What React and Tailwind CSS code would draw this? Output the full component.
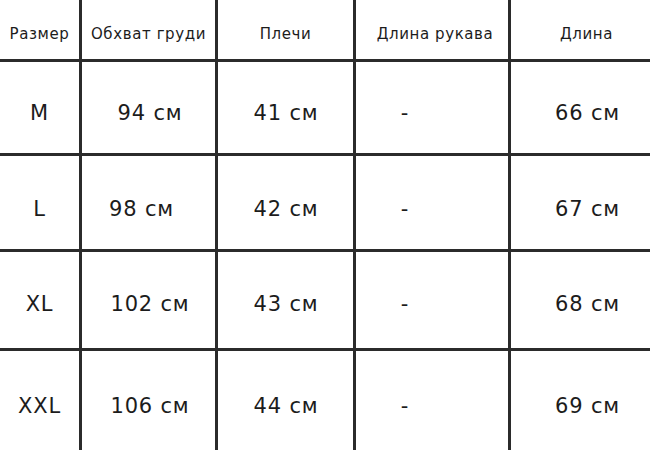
import React from "react";

const headers = ["Размер", "Обхват груди", "Плечи", "Длина рукава", "Длина"];

const rows = [
  { size: "M", chest: "94 см", shoulders: "41 см", length: "66 см", pad: "pt-[13px]" },
  { size: "L", chest: "98 см", shoulders: "42 см", length: "67 см", pad: "pt-[14px]", chestShift: "pr-[14px]" },
  { size: "XL", chest: "102 см", shoulders: "43 см", length: "68 см", pad: "pt-[9px]" },
  { size: "XXL", chest: "106 см", shoulders: "44 см", length: "69 см", pad: "pt-[12px]" },
];

function Cell({ children, className = "" }) {
  return (
    <div className={`bg-white flex items-center justify-center text-[#1c1c1c] ${className}`}>
      {children}
    </div>
  );
}

export default function App() {
  return (
    <div
      className="w-[650px] h-[450px] bg-[#2b2b2b] grid grid-cols-[79px_133px_135px_152px_139px] grid-rows-[59px_91px_93px_96px_99px] gap-[3px] overflow-hidden"
      style={{ fontFamily: '"DejaVu Sans", sans-serif' }}
    >
      {headers.map((h, i) => (
        <Cell
          key={h}
          className={`text-[15px] tracking-[0.6px] pt-[9px] ${i === 3 ? "pl-[6px]" : ""} ${i === 4 ? "pl-[12px]" : ""}`}
        >
          {h}
        </Cell>
      ))}
      {rows.map((r) => (
        <React.Fragment key={r.size}>
          <Cell className={`text-[21px] tracking-[0.8px] ${r.pad}`}>{r.size}</Cell>
          <Cell className={`text-[21px] tracking-[0.8px] ${r.pad} ${r.chestShift || "pl-[3px]"}`}>{r.chest}</Cell>
          <Cell className={`text-[21px] tracking-[0.8px] ${r.pad} pl-[1px]`}>{r.shoulders}</Cell>
          <Cell className={`text-[21px] ${r.pad} pr-[55px]`}>-</Cell>
          <Cell className={`text-[21px] tracking-[0.8px] ${r.pad} pl-[14px]`}>{r.length}</Cell>
        </React.Fragment>
      ))}
    </div>
  );
}
